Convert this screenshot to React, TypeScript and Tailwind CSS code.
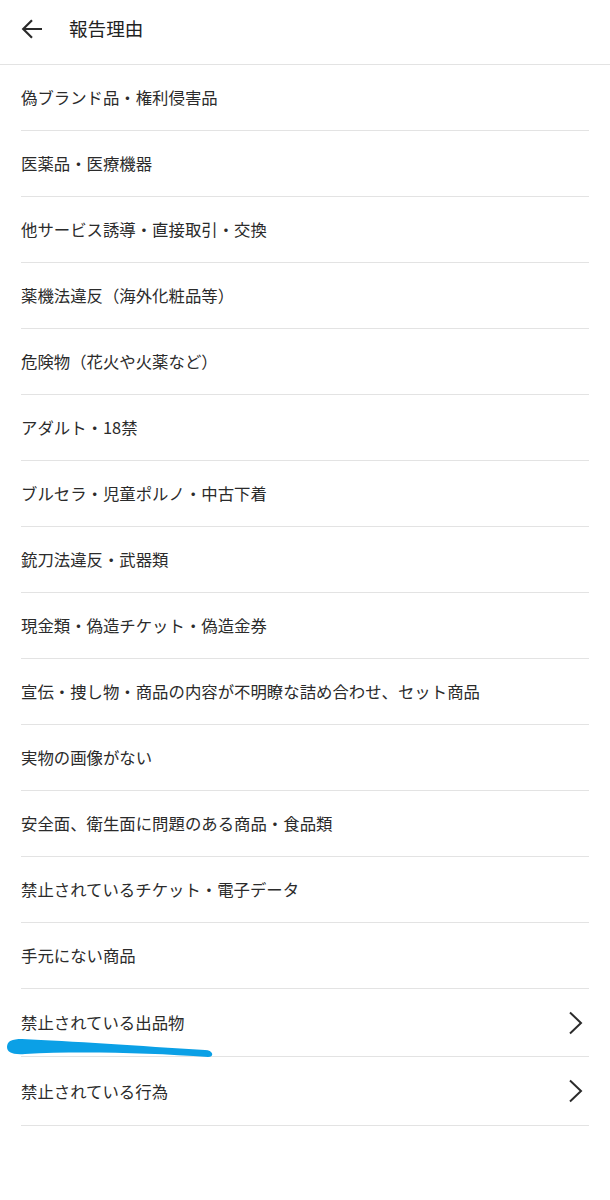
import React from "react";

const items: { label: string; h: string; chevron?: boolean }[] = [
  { label: "偽ブランド品・権利侵害品", h: "h-[66px]" },
  { label: "医薬品・医療機器", h: "h-[66px]" },
  { label: "他サービス誘導・直接取引・交換", h: "h-[66px]" },
  { label: "薬機法違反（海外化粧品等）", h: "h-[66px]" },
  { label: "危険物（花火や火薬など）", h: "h-[66px]" },
  { label: "アダルト・18禁", h: "h-[66px]" },
  { label: "ブルセラ・児童ポルノ・中古下着", h: "h-[66px]" },
  { label: "銃刀法違反・武器類", h: "h-[66px]" },
  { label: "現金類・偽造チケット・偽造金券", h: "h-[66px]" },
  { label: "宣伝・捜し物・商品の内容が不明瞭な詰め合わせ、セット商品", h: "h-[66px]" },
  { label: "実物の画像がない", h: "h-[66px]" },
  { label: "安全面、衛生面に問題のある商品・食品類", h: "h-[66px]" },
  { label: "禁止されているチケット・電子データ", h: "h-[66px]" },
  { label: "手元にない商品", h: "h-[66px]" },
  { label: "禁止されている出品物", h: "h-[68px]", chevron: true },
  { label: "禁止されている行為", h: "h-[69px]", chevron: true },
];

export default function App() {
  return (
    <div
      className="relative w-[610px] min-h-[1200px] bg-white text-[#2b2b2b]"
      style={{ fontFamily: '"Noto Sans CJK JP", "Noto Sans", Roboto, sans-serif' }}
    >
      <header className="flex h-[65px] items-center border-b border-[#e3e3e3] pb-[7px]">
        <div className="flex w-[69px] items-center pl-[21px]">
          <svg width="22" height="22" viewBox="0 0 22 22">
            <path
              d="M21 11 H2.5 M11 2.2 L2.2 11 L11 19.8"
              fill="none"
              stroke="#2b2b2b"
              strokeWidth="2.2"
            />
          </svg>
        </div>
        <h1 className="text-[18.6px] font-normal leading-none text-[#222]">報告理由</h1>
      </header>
      <ul className="px-[21px]">
        {items.map((it) => (
          <li
            key={it.label}
            className={`flex items-center justify-between border-b border-[#e3e3e3] ${it.h}`}
          >
            <span className="text-[16.4px] leading-none">{it.label}</span>
            {it.chevron && (
              <svg width="16" height="24" viewBox="0 0 16 24" className="mr-[5px]">
                <path d="M2 1.5 L13 12 L2 22.5" fill="none" stroke="#2b2b2b" strokeWidth="2" />
              </svg>
            )}
          </li>
        ))}
      </ul>
      <svg
        className="pointer-events-none absolute left-0 top-[1030px]"
        width="230"
        height="35"
        viewBox="0 0 230 35"
      >
        <path
          d="M7 17 C7 11 12 9 22 9 C70 11 140 16 205 20 C213 20 215 27 208 27 C150 23 80 21 25 24 C12 25 7 22 7 17 Z"
          fill="#0ba0e6"
        />
      </svg>
    </div>
  );
}
